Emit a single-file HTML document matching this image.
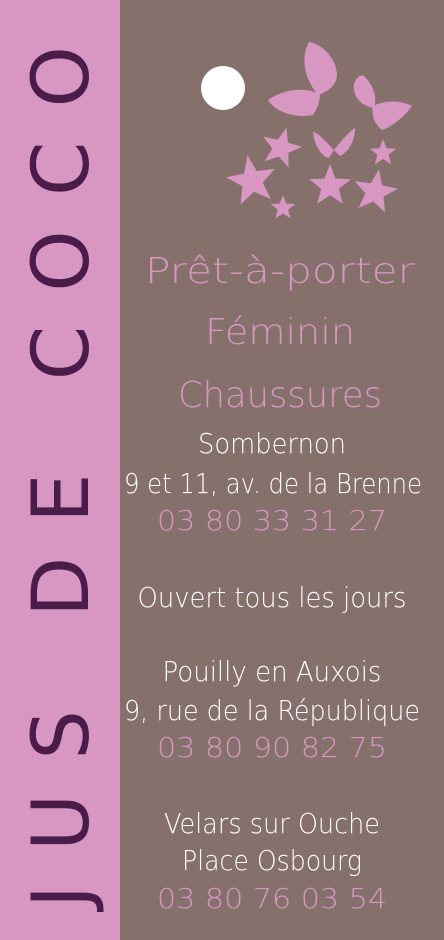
<!DOCTYPE html>
<html><head><meta charset="utf-8"><style>
html,body{margin:0;padding:0;width:444px;height:940px;overflow:hidden;background:#86706b}
svg{display:block}
text{font-family:"DejaVu Sans","Liberation Sans",sans-serif;font-weight:200}
</style></head><body>
<svg width="444" height="940" viewBox="0 0 444 940" xmlns="http://www.w3.org/2000/svg">
<defs>
<polygon id="st" points="0,-1 .247,-.34 .951,-.309 .399,.13 .588,.809 0,.42 -.588,.809 -.399,.13 -.951,-.309 -.247,-.34"/>
</defs>
<rect x="0" y="0" width="120" height="940" fill="#d797c2"/>
<rect x="120" y="0" width="324" height="940" fill="#86706b"/>
<text transform="translate(88,908) rotate(-90)" font-size="78" fill="#4a1c4a" textLength="862" lengthAdjust="spacing" style="font-weight:normal">JUS DE COCO</text>
<circle cx="223" cy="88" r="22" fill="#fff"/>
<g fill="#d797c2">
<path d="M318,95 C305,80 300,58 309,42 C322,44 336,58 337,74 C337,86 327,92 318,95Z"/>
<path d="M320,94 C302,86 282,90 268,100 C274,110 292,119 313,115 C318,108 320,100 320,94Z"/>
<path d="M374,108 C360,106 352,95 354,84 C356,78 360,74 364,76 C372,84 378,96 374,108Z"/>
<path d="M373,106 C385,100 400,100 412,106 C405,116 392,127 382,130 C375,125 371,116 373,106Z"/>
<path d="M334,150 C326,142 318,132 313,132 C314,143 320,156 329,158Z"/>
<path d="M334,150 C342,140 350,131 355,128 C355,140 349,152 340,156Z"/>
<use href="#st" transform="translate(281,148) rotate(15) scale(21)"/>
<use href="#st" transform="translate(252,181) rotate(-10) scale(26)"/>
<use href="#st" transform="translate(283,208) scale(13)"/>
<use href="#st" transform="translate(330,186) scale(22)"/>
<use href="#st" transform="translate(375,192) rotate(10) scale(23)"/>
<use href="#st" transform="translate(383,153) scale(14)"/>
</g>
<g text-anchor="middle">
<text x="280" y="283" font-size="36" fill="#d797c2" textLength="270" lengthAdjust="spacingAndGlyphs">Prêt-à-porter</text>
<text x="280" y="344" font-size="36" fill="#d797c2" textLength="150" lengthAdjust="spacingAndGlyphs">Féminin</text>
<text x="280" y="407" font-size="36" fill="#d797c2" textLength="204" lengthAdjust="spacingAndGlyphs">Chaussures</text>
<text x="272" y="453" font-size="28" fill="#fff" textLength="148" lengthAdjust="spacingAndGlyphs">Sombernon</text>
<text x="273" y="493" font-size="28" fill="#fff" textLength="298" lengthAdjust="spacingAndGlyphs">9 et 11, av. de la Brenne</text>
<text x="272" y="530" font-size="28" fill="#d797c2" textLength="230" lengthAdjust="spacingAndGlyphs">03 80 33 31 27</text>
<text x="272" y="607" font-size="28" fill="#fff" textLength="269" lengthAdjust="spacingAndGlyphs">Ouvert tous les jours</text>
<text x="272" y="681" font-size="28" fill="#fff" textLength="219" lengthAdjust="spacingAndGlyphs">Pouilly en Auxois</text>
<text x="272" y="720" font-size="28" fill="#fff" textLength="296" lengthAdjust="spacingAndGlyphs">9, rue de la République</text>
<text x="272" y="757" font-size="28" fill="#d797c2" textLength="230" lengthAdjust="spacingAndGlyphs">03 80 90 82 75</text>
<text x="272" y="833" font-size="28" fill="#fff" textLength="216" lengthAdjust="spacingAndGlyphs">Velars sur Ouche</text>
<text x="272" y="870" font-size="28" fill="#fff" textLength="180" lengthAdjust="spacingAndGlyphs">Place Osbourg</text>
<text x="272" y="908" font-size="28" fill="#d797c2" textLength="230" lengthAdjust="spacingAndGlyphs">03 80 76 03 54</text>
</g>
</svg>
</body></html>
